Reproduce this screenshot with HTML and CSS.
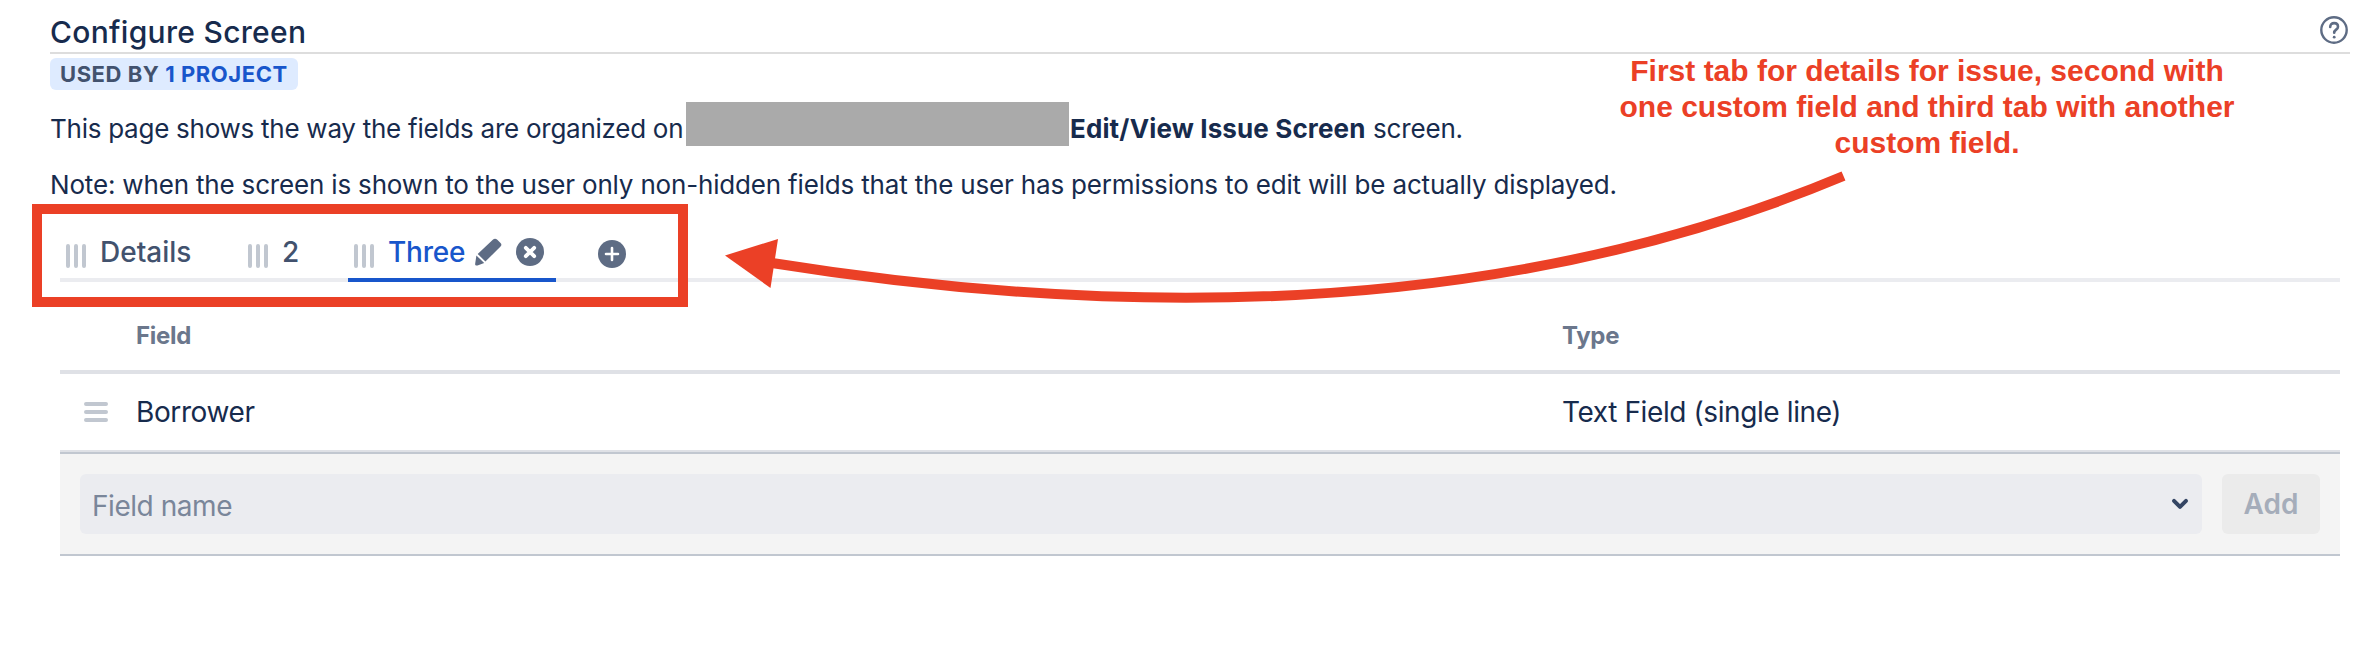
FILE: index.html
```html
<!DOCTYPE html>
<html lang="en">
<head>
    <meta charset="UTF-8">
    <title>Configure Screen</title>
    <meta name="viewport" content="width=device-width, initial-scale=1.0">
    <link rel="stylesheet" href="styles.css">
</head>
<body>
    <header class="page-header">
        <h1>Configure Screen</h1>
        <svg class="help-icon" width="28" height="28" viewBox="0 0 28 28" fill="none" stroke="#5e6c84" role="img" aria-label="Help">
            <circle cx="14" cy="14" r="12.7" stroke-width="2.4"/>
            <path d="M10.2 11c0-2.3 1.6-3.9 3.9-3.9s3.9 1.5 3.9 3.6c0 3-3.8 2.9-3.8 6.1" stroke-width="2.6" stroke-linecap="round"/>
            <circle cx="14.2" cy="21.2" r="1.4" fill="#5e6c84" stroke="none"/>
        </svg>
    </header>
    <main>
        <div class="badge">USED BY <a>1 PROJECT</a></div>
        <p class="intro">
            <span class="intro-start">This page shows the way the fields are organized on</span>
            <span class="redacted"></span>
            <b>Edit/View Issue Screen</b>
            <span class="intro-end">screen.</span>
        </p>
        <p class="note">Note: when the screen is shown to the user only non-hidden fields that the user has permissions to edit will be actually displayed.</p>

        <div class="config">
            <nav class="tabs">
                <div class="tab tab-details">
                    <svg class="grip" width="20" height="24"><path d="M2 2v20M10 2v20M18 2v20"/></svg>
                    <span>Details</span>
                </div>
                <div class="tab tab-two">
                    <svg class="grip" width="20" height="24"><path d="M2 2v20M10 2v20M18 2v20"/></svg>
                    <span>2</span>
                </div>
                <div class="tab tab-three active">
                    <svg class="grip" width="20" height="24"><path d="M2 2v20M10 2v20M18 2v20"/></svg>
                    <span>Three</span>
                    <svg class="edit-icon" width="28" height="28" viewBox="0 0 28 28" fill="#5e6c84">
                        <path d="M18.8 1.8a3.2 3.2 0 0 1 4.5 0l3 3a2.6 2.6 0 0 1 0 3.9L11.4 23.6 3.7 15.9Z"/>
                        <path d="M2.4 17.4l7.8 7.6-6.7 2.4c-1.6.5-2.7-.4-2.3-2Z"/>
                    </svg>
                    <svg class="delete-icon" width="28" height="28" viewBox="0 0 28 28">
                        <circle cx="14" cy="14" r="14" fill="#5e6c84"/>
                        <path d="M9.8 9.8l8.4 8.4M18.2 9.8l-8.4 8.4" stroke="#fff" stroke-width="3.8" stroke-linecap="round"/>
                    </svg>
                </div>
                <svg class="add-tab" width="28" height="28" viewBox="0 0 28 28">
                    <circle cx="14" cy="14" r="14" fill="#5e6c84"/>
                    <path d="M14 8v12M8 14h12" stroke="#fff" stroke-width="2.6" stroke-linecap="round"/>
                </svg>
            </nav>
            <div class="row table-head">
                <span class="col-field">Field</span>
                <span>Type</span>
            </div>
            <div class="row table-row">
                <svg class="grip drag" width="24" height="20"><path d="M2 2h20M2 10h20M2 18h20"/></svg>
                <span class="col-field">Borrower</span>
                <span>Text Field (single line)</span>
            </div>
            <div class="add-row">
                <div class="field-select">
                    <span>Field name</span>
                    <svg width="18" height="14" viewBox="0 0 18 14" fill="none" stroke="#344563" stroke-width="4" stroke-linecap="round" stroke-linejoin="round">
                        <path d="M3 3.8l6 6 6-6"/>
                    </svg>
                </div>
                <button class="add-btn" disabled>Add</button>
            </div>
        </div>
    </main>

    <!-- Annotations over the page -->
    <div class="highlight"></div>
    <div class="callout">First tab for details for issue, second with<br>one custom field and third tab with another<br>custom field.</div>
    <svg class="arrow" width="1130" height="160" viewBox="720 160 1130 160">
        <path d="M772 263Q1397 363 1843.5 176" fill="none" stroke="#eb4026" stroke-width="10"/>
        <path d="M725 255.5L778 239l-7.5 49Z" fill="#eb4026"/>
    </svg>
</body>
</html>
```
FILE: styles.css
```css
body {
    margin: 0;
    background: #fff;
    color: #172b4d;
    font-family: Inter, "Liberation Sans", sans-serif;
    font-size: 26px;
}
.page-header {
    box-sizing: border-box;
    height: 54px;
    margin: 0 28px 0 50px;
    border-bottom: 2px solid #ddd;
    display: flex;
    justify-content: space-between;
    align-items: flex-start;
}
h1 {
    margin: 12px 0 0;
    font-size: 30px;
    line-height: 40px;
    font-weight: 500;
    letter-spacing: 0.3px;
}
.help-icon {
    margin: 16px 2px 0 0;
}
main {
    padding: 4px 38px 0 50px;
}
.badge {
    box-sizing: border-box;
    width: 248px;
    height: 32px;
    padding-left: 10px;
    border-radius: 6px;
    background: #deebff;
    color: #42526e;
    font-size: 22px;
    line-height: 32px;
    font-weight: 700;
    letter-spacing: 0.55px;
    white-space: nowrap;
}
.badge a {
    color: #1856cb;
}
p {
    margin: 0;
    letter-spacing: -0.175px;
    white-space: nowrap;
}
.intro {
    display: flex;
    margin-top: 12px;
    line-height: 53px;
}
.intro-start {
    width: 636px;
    letter-spacing: -0.26px;
}
.redacted {
    width: 383px;
    height: 44px;
    background: #aaa;
}
.intro b {
    width: 303px;
    padding-left: 1px;
    letter-spacing: 0.13px;
}
.note {
    margin-top: 14px;
    line-height: 31px;
}
.config {
    margin: 30px 0 0 10px;
}

/* Tabs */
.tabs {
    display: flex;
    height: 48px;
    border-bottom: 4px solid #ebecf0;
    font-size: 28px;
    font-weight: 500;
    line-height: 44px;
    color: #42526e;
}
.tab {
    box-sizing: border-box;
    display: flex;
    height: 52px;
    padding-left: 6px;
}
.tab-details {
    width: 182px;
}
.tab-two {
    width: 106px;
}
.tab-three {
    width: 208px;
}
.tab.active {
    border-bottom: 4px solid #1856cb;
    color: #1856cb;
}
.grip {
    flex: none;
    margin: 14px 14px 0 0;
    stroke: #c1c7d0;
    stroke-width: 4;
    stroke-linecap: round;
}
.tab-three span {
    width: 86px;
    letter-spacing: -0.2px;
}
.edit-icon {
    margin-top: 8px;
}
.delete-icon {
    margin: 8px 0 0 14px;
}
.add-tab {
    margin: 10px 0 0 42px;
}

/* Fields table */
.row {
    display: flex;
    align-items: center;
    box-sizing: border-box;
}
.table-head {
    height: 92px;
    padding: 18px 0 0 76px;
    border-bottom: 4px solid #dfe1e6;
    color: #6b778c;
    font-size: 24px;
    font-weight: 700;
    letter-spacing: -0.3px;
}
.table-row {
    height: 78px;
    padding-left: 24px;
    border-bottom: 2px solid #dfe1e6;
    font-size: 28px;
    letter-spacing: -0.4px;
}
.col-field {
    width: 1426px;
}
.drag {
    margin: 0 28px 0 0;
}
.add-row {
    display: flex;
    gap: 20px;
    padding: 20px;
    border-top: 2px solid #c1c7d0;
    border-bottom: 2px solid #c1c7d0;
    background: #f4f4f4;
}
.field-select {
    box-sizing: border-box;
    flex: 1;
    display: flex;
    justify-content: space-between;
    align-items: center;
    height: 60px;
    padding: 0 13px 0 12px;
    border-radius: 6px;
    background: #ebecf0;
    color: #7a869a;
    font-size: 28px;
    letter-spacing: -0.45px;
}
.field-select span {
    padding-top: 3px;
}
.add-btn {
    width: 98px;
    height: 60px;
    padding: 0;
    border: none;
    border-radius: 6px;
    background: #ebebeb;
    color: #a5adba;
    font: 600 28px Inter, sans-serif;
}

/* Annotations */
.highlight {
    position: absolute;
    left: 32px;
    top: 204px;
    box-sizing: border-box;
    width: 656px;
    height: 103px;
    border: 10px solid #eb4026;
}
.callout {
    position: absolute;
    left: 1577px;
    top: 53px;
    width: 700px;
    color: #eb4026;
    font: bold 30px/36px "Liberation Sans", Arial, sans-serif;
    text-align: center;
}
.arrow {
    position: absolute;
    left: 720px;
    top: 160px;
}
```
